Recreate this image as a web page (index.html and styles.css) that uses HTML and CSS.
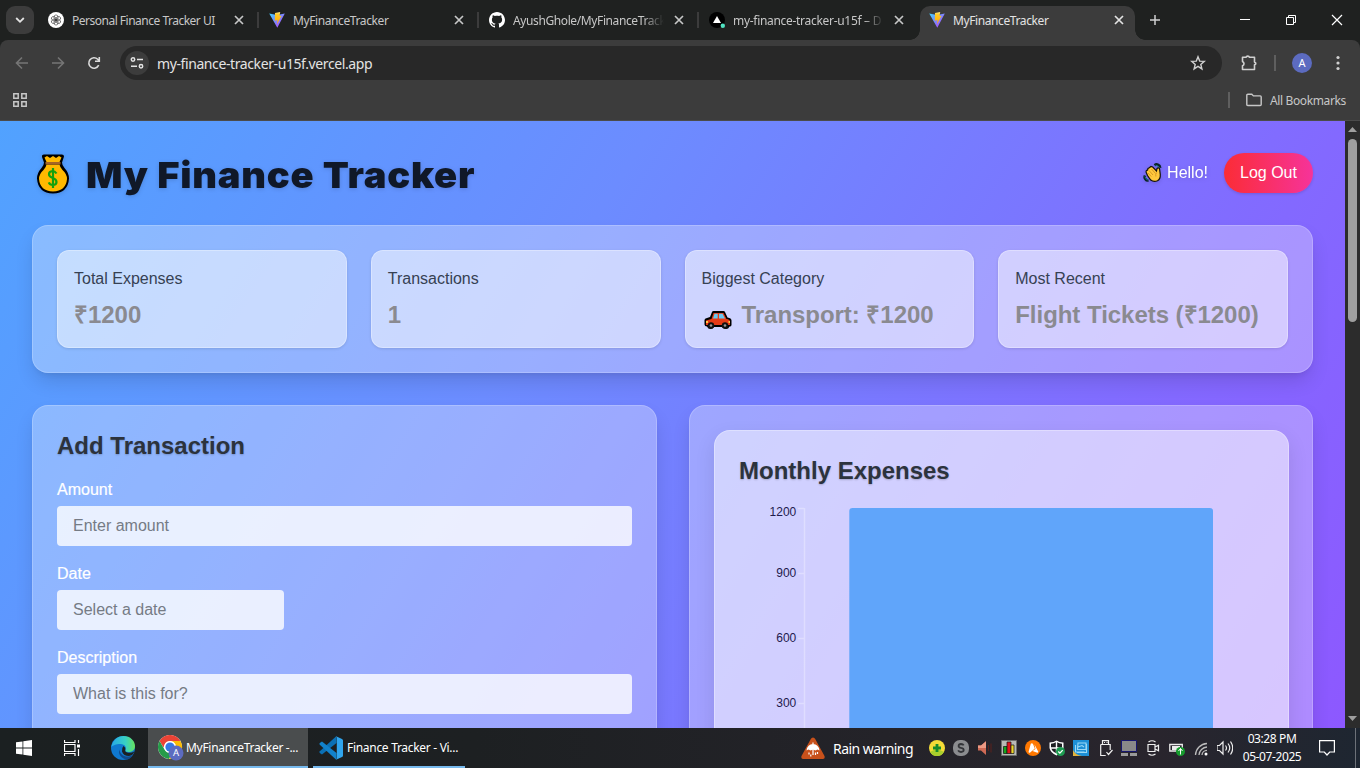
FILE: index.html
```html
<!DOCTYPE html>
<html lang="en">
<head>
<meta charset="utf-8">
<title>MyFinanceTracker</title>
<link rel="stylesheet" href="styles.css">
</head>
<body>
<svg class="defs" width="0" height="0">
  <defs>
    <linearGradient id="viteA" x1="0" y1="0" x2="1" y2="1"><stop offset="0" stop-color="#41d1ff"/><stop offset="1" stop-color="#bd34fe"/></linearGradient>
    <linearGradient id="viteB" x1="0" y1="0" x2="0" y2="1"><stop offset="0" stop-color="#ffea83"/><stop offset=".2" stop-color="#ffc928"/><stop offset="1" stop-color="#ffa800"/></linearGradient>
    <linearGradient id="edgeA" x1="0" y1="0" x2="1" y2="0"><stop offset="0" stop-color="#27a8e8"/><stop offset=".6" stop-color="#38d0c4"/><stop offset="1" stop-color="#67e35c"/></linearGradient>
    <symbol id="vite" viewBox="0 0 16 16"><path fill="url(#viteA)" d="M.2 1.6 8 3l7.8-1.4L8.3 15.7z"/><path fill="url(#viteB)" d="m6 .9 5.2-.9-.6 4 2-.3L8 12.3l.5-4.2-2.7.6z"/></symbol>
    <symbol id="x" viewBox="0 0 10 10"><path d="m1 1 8 8M9 1 1 9" stroke="currentColor" stroke-width="1.7" fill="none"/></symbol>
  </defs>
</svg>

<div class="tabstrip">
  <div class="tab-search"><svg width="10" height="8" viewBox="0 0 10 8"><path d="m1.2 2 3.8 3.8L8.8 2" fill="none" stroke="#e3e3e3" stroke-width="1.8"/></svg></div>
  <div class="tab first">
    <svg class="fav" viewBox="0 0 16 16"><circle cx="8" cy="8" r="8" fill="#fff"/><g fill="none" stroke="#333" stroke-width=".6"><ellipse cx="8" cy="5.6" rx="2" ry="2.700"/><ellipse cx="8" cy="5.6" rx="2" ry="2.700" transform="rotate(60 8 8)"/><ellipse cx="8" cy="5.6" rx="2" ry="2.700" transform="rotate(120 8 8)"/><ellipse cx="8" cy="5.6" rx="2" ry="2.700" transform="rotate(180 8 8)"/><ellipse cx="8" cy="5.6" rx="2" ry="2.700" transform="rotate(240 8 8)"/><ellipse cx="8" cy="5.6" rx="2" ry="2.700" transform="rotate(300 8 8)"/></g></svg>
    <span class="tab-title t1">Personal Finance Tracker UI</span><svg class="close"><use href="#x"/></svg><i></i>
  </div>
  <div class="tab"><svg class="fav"><use href="#vite"/></svg><span class="tab-title t2">MyFinanceTracker</span><svg class="close"><use href="#x"/></svg><i></i></div>
  <div class="tab">
    <svg class="fav" viewBox="0 0 16 16"><path fill="#fff" d="M8 0C3.6 0 0 3.6 0 8c0 3.5 2.3 6.5 5.5 7.6.4.1.5-.2.5-.4v-1.5c-2.2.5-2.7-1-2.7-1-.4-.9-.9-1.200-.9-1.200-.7-.5.1-.5.1-.5.8.1 1.200.8 1.200.8.7 1.200 1.900.9 2.300.7.1-.5.3-.9.5-1.100-1.800-.2-3.600-.9-3.600-4 0-.9.3-1.600.8-2.100-.1-.2-.4-1 .1-2.100 0 0 .7-.2 2.200.8.600-.2 1.300-.3 2-.3s1.400.1 2 .3c1.500-1 2.200-.8 2.200-.8.4 1.100.2 1.900.1 2.100.5.6.8 1.300.8 2.100 0 3.100-1.900 3.700-3.700 3.900.3.3.6.8.6 1.500v2.200c0 .2.100.5.600.4C13.700 14.500 16 11.500 16 8c0-4.400-3.600-8-8-8z"/></svg>
    <span class="tab-title t3 fade">AyushGhole/MyFinanceTrack</span><svg class="close"><use href="#x"/></svg><i></i>
  </div>
  <div class="tab">
    <svg class="fav" viewBox="0 0 16 16"><circle cx="8" cy="8" r="8" fill="#000"/><path fill="#fff" d="m8 4 4 7H4z"/><circle cx="13.800" cy="13.800" r="2.200" fill="#50e3c2"/></svg>
    <span class="tab-title t4 fade">my-finance-tracker-u15f – D</span><svg class="close"><use href="#x"/></svg>
  </div>
  <div class="tab active"><svg class="fav"><use href="#vite"/></svg><span class="tab-title t2">MyFinanceTracker</span><svg class="close"><use href="#x"/></svg></div>
  <svg class="newtab" width="12" height="12" viewBox="0 0 12 12"><path d="M6 1v10M1 6h10" stroke="#d0d0d0" stroke-width="1.500"/></svg>
  <div class="winctl">
    <svg width="46" height="40" viewBox="0 0 46 40"><path d="M18 19.500h10" stroke="#fff"/></svg>
    <svg width="46" height="40" viewBox="0 0 46 40"><path d="M18.500 17.500h7v7h-7zM20.500 17.500v-2h7v7h-2" stroke="#fff" fill="none"/></svg>
    <svg width="46" height="40" viewBox="0 0 46 40"><path d="m18 15 10 10M28 15 18 25" stroke="#fff" stroke-width="1.200"/></svg>
  </div>
</div>

<div class="toolbar">
  <div class="nav">
    <svg width="16" height="16" viewBox="0 0 16 16"><path d="M14 8H3M8 2.500 2.500 8 8 13.500" fill="none" stroke="#757575" stroke-width="1.600"/></svg>
    <svg width="16" height="16" viewBox="0 0 16 16"><path d="M2 8h11M8 2.500 13.500 8 8 13.500" fill="none" stroke="#757575" stroke-width="1.600"/></svg>
    <svg width="16" height="16" viewBox="0 0 16 16"><path d="M12.700 10.200A5.200 5.200 0 1 1 11.700 4.300L13.500 6M13.300 2v4.300H9" fill="none" stroke="#dcdcdc" stroke-width="1.600"/></svg>
  </div>
  <div class="omnibox">
    <div class="site"><svg width="14" height="14" viewBox="0 0 14 14"><g fill="none" stroke="#e3e3e3" stroke-width="1.500"><circle cx="3" cy="3.500" r="1.700"/><path d="M7 3.500h6M1 10.300h6"/><circle cx="11" cy="10.300" r="1.700"/></g></svg></div>
    <span class="url">my-finance-tracker-u15f.vercel.app</span>
    <svg class="star" width="16" height="16" viewBox="0 0 16 16"><path d="m8 1.800 1.700 4.300 4.600.3-3.500 3 1.100 4.500L8 11.400l-3.900 2.500 1.100-4.500-3.500-3 4.600-.3z" fill="none" stroke="#d0d0d0" stroke-width="1.400"/></svg>
  </div>
  <svg class="ext" width="18" height="18" viewBox="0 0 18 18"><path d="M2.500 3.300H6C6.500 1.700 9 1.700 9.500 3.300h5v4.800c1.700.3 1.700 2.300 0 2.600v4.800h-12v-3.800c2-.8 2-3.200 0-4.200z" fill="none" stroke="#d0d0d0" stroke-width="1.600" stroke-linejoin="round"/></svg>
  <span class="vsep"></span>
  <span class="avatar">A</span>
  <svg class="dots" width="4" height="16" viewBox="0 0 4 16"><g fill="#d0d0d0"><circle cx="2" cy="2.500" r="1.600"/><circle cx="2" cy="8" r="1.600"/><circle cx="2" cy="13.500" r="1.600"/></g></svg>
</div>

<div class="bookmarks">
  <svg width="14" height="14" viewBox="0 0 14 14"><path d="M.8.8h4.400v4.400H.8zM8.800.8h4.400v4.400H8.800zM.8 8.800h4.400v4.400H.8zM8.800 8.800h4.400v4.400H8.800z" fill="none" stroke="#c7c7c7" stroke-width="1.500"/></svg>
  <div class="allbm"><span class="vsep"></span><svg width="16" height="14" viewBox="0 0 16 14"><path d="M.8 11.500V2.200q0-1 1-1h4l1.600 1.700h6.800q1 0 1 1v7.600q0 1-1 1H1.800q-1 0-1-1z" fill="none" stroke="#c7c7c7" stroke-width="1.400"/></svg><span>All Bookmarks</span></div>
</div>

<div class="view">
  <main class="page">
    <header class="head">
      <h1>
        <svg width="34" height="42" viewBox="0 0 34 42"><path d="M6 2.500Q7 1 9 1.500h16q3-.5 3 2l-2 6q0 3 2.500 5.500Q33 20 33 25.500 32 40 17 40.500 2 40 1 25.500 1 20 5.500 15 8 12.500 8 9.500L6 4z" fill="#000"/><path d="M8.500 4.500 11 3l3 2 3-2 3 2 3-2 2.500 1.500L23.500 9h-13zM10.500 11.500h13q.5 3 3 5.500Q31 21 31 26q-1 12-14 12.500Q4 38 3 26q0-5 4.500-9 2.500-2.500 3-5.500z" fill="#ffb900"/><path d="M9.500 9h15v2.500h-15z" fill="#a56427"/><path d="M20.500 20.500Q19 18 16.500 18q-3.500.3-3.500 3.300 0 2.300 3.800 3.700 3.700 1.300 3.700 4 0 3-3.700 3-3 0-4-2.600M17 15v20" fill="none" stroke="#13a10e" stroke-width="2.200"/></svg>
        <span>My Finance Tracker</span>
      </h1>
      <div class="user">
        <span class="hello"><svg width="20" height="20" viewBox="0 0 20 20"><path d="M11.500 2.200q1.800-1.400 3.500-.4 2.300.8 2 3M2 12.500q-1 2.300.5 3.700 1 1.600 3 1.300" fill="none" stroke="#0b2227" stroke-width="2.600"/><path d="M12.500 2.300q3 0 3.800 2.700M2 13.500q.5 2.800 3 3.600" fill="none" stroke="#157c86" stroke-width="1"/><path d="M4.500 12.500 3 9q0-1.800 1.500-1.800L5 5.500l1.300-.7L8 3.500l1.700.5L13.500 8l.5-2.500q1.200-1.300 2.500 0l.8 6q.3 4.500-2.800 6.200-3.800 1.600-6.800-.7z" fill="#ffc83d" stroke="#14120c" stroke-width="1.200"/><path d="m6 7.500 4 4.500M8.500 6l4 4.500M5 10l3.200 3.500M13.700 9.500q-1.500 1.800-.8 4" stroke="#d18b20" fill="none" stroke-width=".8"/></svg>Hello!</span>
        <button class="logout">Log Out</button>
      </div>
    </header>

    <section class="panel stats">
      <div class="stat"><p>Total Expenses</p><strong>₹1200</strong></div>
      <div class="stat"><p>Transactions</p><strong>1</strong></div>
      <div class="stat"><p>Biggest Category</p><strong><svg class="car" width="28" height="18" viewBox="0 0 28 18"><path d="M.5 9Q.5 7.500 3 7L6 6 8 1q.4-1 1.500-1h10q1 0 1.500 1l2.500 5.500q4 .5 4 3V14q0 1.500-2 1.500-1 2.500-3.500 2.500T18 16h-8q-1 2-3.500 2T3 15.500q-2.500 0-2.500-2z" fill="#000"/><path d="M2 9.500 7.500 8l2-6h10l3 6q3.500.5 3.500 2.500v3.500H2z" fill="#e63b16"/><path d="m9 7.500 1.500-4.700h3.200v4.700zM15 2.800h3.500L21 7.500h-6z" fill="#67c8f2"/><path d="M2 10h2v2H2zM24.500 10h1.500v2h-1.500z" fill="#ffc83d"/><circle cx="7" cy="14.500" r="3.200" fill="#111"/><circle cx="21" cy="14.500" r="3.200" fill="#111"/><circle cx="7" cy="14.500" r="1.300" fill="#999"/><circle cx="21" cy="14.500" r="1.300" fill="#999"/></svg>Transport: ₹1200</strong></div>
      <div class="stat"><p>Most Recent</p><strong>Flight Tickets (₹1200)</strong></div>
    </section>

    <div class="cols">
      <section class="panel form">
        <h2>Add Transaction</h2>
        <label>Amount</label><input placeholder="Enter amount">
        <label>Date</label><input class="date" placeholder="Select a date">
        <label>Description</label><input placeholder="What is this for?">
      </section>
      <section class="panel">
        <div class="chart">
          <h2>Monthly Expenses</h2>
          <svg width="525" height="260" viewBox="0 0 525 260">
            <path d="M65.500 5v255M59 5.500h6M59 70.500h6M59 135.500h6M59 200.500h6" stroke="#fff" stroke-opacity=".3" fill="none" stroke-width="1.500"/>
            <path d="M110.300 260V8q0-3 3-3h357.700q3 0 3 3v252z" fill="#60a5fa"/>
            <g class="ticks"><text x="57.300" y="13">1200</text><text x="57.300" y="74">900</text><text x="57.300" y="139">600</text><text x="57.300" y="204">300</text></g>
          </svg>
        </div>
      </section>
    </div>
  </main>
  <div class="scroll"><svg width="9" height="5" viewBox="0 0 9 5"><path d="M4.500 0 9 5H0z" fill="#9f9f9f"/></svg><span class="thumb"></span><svg width="9" height="5" viewBox="0 0 9 5"><path d="M4.500 5 9 0H0z" fill="#9f9f9f"/></svg></div>
</div>

<div class="taskbar">
  <div class="tb start"><svg width="16" height="16" viewBox="0 0 16 16"><path fill="#fff" d="M0 2.300 6.500 1.400v6.200H0zM7.300 1.300 16 0v7.600H7.300zM0 8.400h6.500v6.200L0 13.700zM7.300 8.400H16V16l-8.700-1.300z"/></svg></div>
  <div class="tb view-btn"><svg width="17" height="16" viewBox="0 0 17 16"><path d="M.5 0v2.500h10.500V0M.5 16v-2.500h10.500V16M.5 4.500h10.500v7H.5zM14.500 0v3M14.500 9v7" fill="none" stroke="#fff" stroke-width="1.200"/><path d="M13 4.500h3v3h-3z" fill="#fff"/></svg></div>
  <div class="tb edge"><svg width="24" height="24" viewBox="0 0 24 24"><circle cx="12" cy="12" r="12" fill="#0f78cf"/><path d="M.3 11C1.500 4.500 6.500 0 12.500 0 19.500 0 24 5 24 10c0 4-3 6-6.500 6-2.500 0-3.800-.8-3-2 1.500-2.200-.5-6-5-6C5 8 1.500 9.500.3 11z" fill="url(#edgeA)"/><path d="M8.500 13.500c0 4.500 4.500 7.500 9 7 2 0 4-1.200 4.500-1.500-1.500 2.700-3.500 4-5.500 4.500-5.500-.5-10-5-8-10z" fill="#114a8b"/><path d="M12.500 10q2.500 1.500 1.800 4-.8 1.400 1.200 2.200 4 1.500 7.800-.7-1.300 4-5.300 4.500-5.500 0-7-4.500-.5-3.500 1.500-5.500z" fill="#1c2022"/></svg></div>
  <div class="task on"><svg width="26" height="26" viewBox="0 0 26 26"><circle cx="12" cy="12" r="12" fill="#fff"/><path d="M1.600 6A12 12 0 0 1 22.400 6H12a6 6 0 0 0-5.300 3.200L5.500 12.500z" fill="#ea4335"/><path d="M1.600 6 6.800 15A6 6 0 0 0 12 18h2l-3 6A12 12 0 0 1 1.600 6z" fill="#269b49"/><path d="M22.400 6A12 12 0 0 1 11 24l6.200-9a6 6 0 0 0-5.200-9z" fill="#fbbc05"/><circle cx="12" cy="12" r="5.800" fill="#fff"/><circle cx="12" cy="12" r="4.600" fill="#3478e5"/><circle cx="18" cy="18" r="7.500" fill="#5c6bc0"/><text x="18" y="21.300" text-anchor="middle" class="badge">A</text></svg><span class="k1">MyFinanceTracker -...</span></div>
  <div class="task"><svg width="24" height="24" viewBox="0 0 24 24"><path d="M17.500 0v7L3 18.500.8 17q-.8-.8 0-1.700z" fill="#0b70b5"/><path d="M17.500 24v-7L3 5.500.8 7q-.8.800 0 1.700z" fill="#1282cc"/><path d="M17 0.300 23 3q1 .6 1 1.600v14.800q0 1-1 1.600l-6 2.800q.8-.4.800-1.800V2q0-1.300-.8-1.700z" fill="#30a5ee"/></svg><span class="k2">Finance Tracker - Vi...</span></div>
  <div class="weather"><svg width="24" height="22" viewBox="0 0 24 22"><path d="M12 .5q1.500 0 2.200 1.500l9.300 17q.8 3-1.500 3H2q-2.300 0-1.500-3l9.300-17Q10.500.5 12 .5z" fill="#c8511b"/><path d="M5.500 13.500Q6.500 7 12 7t6.500 6.500l-2-1-2 1-2.500-1-2.500 1-2-1zM11.400 5.500h1.200V18h-1.200z" fill="#fff"/><path d="M8 15.500v2M9.800 17.500v2M14.500 15.500v2.500M16.500 15v2" stroke="#fff" stroke-width="1.200"/></svg><span>Rain warning</span></div>
  <div class="tray">
    <svg viewBox="0 0 16 16"><circle cx="8" cy="8" r="8" fill="#f3dc37"/><path d="M1 12Q8 7 15 12a8 8 0 0 1-14 0z" fill="#a9cf2c"/><path d="M6.600 4h2.800v2.600H12v2.800H9.400V12H6.600V9.400H4V6.600h2.600z" fill="#178a2b"/></svg>
    <svg viewBox="0 0 16 16"><rect width="16" height="16" rx="7" fill="#8b8c8f"/><path d="M10.700 5.400Q10 4 8 4q-2.400.1-2.400 1.900 0 1.400 2.500 2 2.600.5 2.600 2.200 0 1.800-2.700 1.900-2.100 0-2.900-1.600" stroke="#333438" stroke-width="1.800" fill="none"/></svg>
    <svg viewBox="0 0 16 16"><path d="M1 5.500h3L9 1v14l-5-4.500H1z" fill="#cf6a55"/><path d="m4 5.500 5-4V8H1V5.500z" fill="#eb9a85"/><path d="M11.500 5v6M14 3.500v9" stroke="#5b211c" stroke-width="1"/></svg>
    <svg viewBox="0 0 16 16"><path d="M.5.500h15v15H.5z" fill="#b9bab5" stroke="#6d6d6d"/><path d="M2.500 6.500h3.500v7H2.500z" fill="#16a51d" stroke="#111" stroke-width=".7"/><path d="M6 2h4v11.500H6z" fill="#e3131a" stroke="#111" stroke-width=".7"/><path d="M10 5h3v8.500h-3z" fill="#edd62b" stroke="#111" stroke-width=".7"/></svg>
    <svg viewBox="0 0 16 16"><circle cx="8" cy="8" r="8" fill="#ff7800"/><path d="M5.800 3.700q1.200-1.200 2.200.3l1.800 4.500-4.600 4q-1.700.8-1.600-.8zM9.500 4.500l3.800 7.200q-.3 1.300-1.600.8L7.500 11l3-2z" fill="#fff"/></svg>
    <svg viewBox="0 0 16 16"><path d="M7.500.500Q10 2.500 14.500 2.500V8q-1 5-7 7.500Q1.500 13 .5 8V2.500Q5 2.500 7.500.5z" fill="#fff"/><path d="M2 3.800q3-.2 4.800-1.500v5H2zM8.200 2.300Q10 3.600 13 3.800v3.500H8.200zM2.300 8.700h4.500v4.600Q3.300 11.500 2.300 8.700zM8.200 8.700H12q-1 3-3.800 4.600z" fill="#1d1f22"/><circle cx="11.500" cy="11.500" r="4.500" fill="#1d9b50"/><path d="m9.300 11.500 1.600 1.600 2.800-3" stroke="#fff" stroke-width="1.300" fill="none"/></svg>
    <svg viewBox="0 0 16 16"><path d="M0 0h16v16H0z" fill="#1d8fd6"/><path d="M0 10v6h9Q2 15 0 10z" fill="#e5b33b"/><path d="M5 3h8v6.500H4.500zM2.500 5v7h9M5 7l4-1.500L11 7M13.500 4v8.500H4" stroke="#9bd9f6" fill="none" stroke-width="1.100"/></svg>
    <svg viewBox="0 0 16 16"><path d="M5.500 4.500V.7h6v3.800M3.700 4.500h9.500V10M3.700 4.500v11h5M7 2.500h1M9.500 2.500h1M9.500 12l2 2.500 4-4.500" stroke="#eee" fill="none" stroke-width="1.200"/></svg>
    <svg viewBox="0 0 16 16"><path d="M.5.500h15v11H.5z" fill="#898989" stroke="#17176e"/><path d="M0 13h7v3H0zM9 13h7v3H9z" fill="#9a9a9a"/></svg>
    <svg viewBox="0 0 16 16"><path d="M3 4.500h7v7H3zM10 7l3.500-1.800v5.600L10 9M3.500 2Q7-.5 10.500 2M3.500 14q3.500 2.500 7 0" stroke="#eee" fill="none" stroke-width="1.200"/></svg>
    <svg viewBox="0 0 16 16"><path d="M.8 4.500h12.500v6.500H.8z" stroke="#eee" fill="none" stroke-width="1.300"/><path d="M3 6h8v4H3z" fill="#eee"/><circle cx="11.500" cy="11.500" r="4.500" fill="#169b2d"/><path d="M11.500 8.500v6M9.500 11l2-2.500 2 2.500" stroke="#fff" fill="none"/></svg>
    <svg viewBox="0 0 16 16"><path d="M2.500 15A12 12 0 0 1 14 3.500M6 15a8.500 8.500 0 0 1 8-8M9 15a5 5 0 0 1 5-4.700" stroke="#bbb" fill="none" stroke-width="1.300"/><circle cx="13" cy="14" r="1.500" fill="#fff"/></svg>
    <svg viewBox="0 0 16 16"><path d="M0 5.500h2.500L6 2v12l-3.500-3.500H0zM8.500 5.500q2 2.500 0 5M11 3.500q3.500 4.500 0 9M13.500 1.500q4.500 6.500 0 13" stroke="#eee" fill="none" stroke-width="1.200"/></svg>
  </div>
  <div class="clock"><span>03:28 PM</span><span>05-07-2025</span></div>
  <svg class="note" width="16" height="16" viewBox="0 0 16 16"><path d="M.6.700h14.800v11.300h-4.700L8 15l-2.700-3H.6z" fill="none" stroke="#fff" stroke-width="1.200"/></svg>
  <span class="peek"></span>
</div>
</body>
</html>
```
FILE: styles.css
```css
* { box-sizing: border-box; }
body { margin: 0; width: 1360px; height: 768px; overflow: hidden; display: flex; flex-direction: column; font-family: "Liberation Sans", Arial, sans-serif; }
svg { display: block; flex: none; }
.defs { position: absolute; }

/* browser chrome */
.tabstrip, .toolbar, .bookmarks, .taskbar { font-family: "Noto Sans", "Open Sans", sans-serif; white-space: nowrap; }
.tabstrip { height: 40px; flex: none; background: #1f2120; display: flex; align-items: center; padding-left: 6px; color: #c7c7c7; }
.tab-search { width: 28px; height: 28px; border-radius: 9px; background: #3c3c3c; display: grid; place-items: center; margin-right: 6px; }
.tab { width: 220px; height: 34px; margin-top: 6px; padding: 0 0 6px 9px; display: flex; align-items: center; position: relative; flex: none; }
.tab.first { padding-left: 8px; }
.fav { width: 16px; height: 16px; margin-right: 8px; }
.tab-title { width: 151px; font-size: 12px; flex: none; line-height: 18px; padding-top: 1px; }
.t1 { letter-spacing: -.5px; }
.t2 { letter-spacing: -.4px; }
.t3 { letter-spacing: -.39px; }
.t4 { letter-spacing: -.3px; }
.fade { -webkit-mask-image: linear-gradient(90deg, #000 130px, transparent 151px); mask-image: linear-gradient(90deg, #000 130px, transparent 151px); }
.close { width: 10px; height: 10px; margin-left: 10px; }
.tab.first .close { margin-left: 11px; }
.tab i { width: 2px; height: 16px; background: #3c3c3c; margin-left: 13px; }
.tab.active { background: #3c3c3c; border-radius: 10px 10px 0 0; width: 215px; color: #e3e3e3; }
.tab.active::before, .tab.active::after { content: ""; position: absolute; bottom: 0; width: 10px; height: 10px; }
.tab.active::before { left: -10px; background: radial-gradient(circle at 0 0, transparent 9.500px, #3c3c3c 10px); }
.tab.active::after { right: -10px; background: radial-gradient(circle at 100% 0, transparent 9.500px, #3c3c3c 10px); }
.newtab { margin-left: 14px; }
.winctl { display: flex; margin-left: auto; }
.toolbar { height: 40px; flex: none; background: #3c3c3c; display: flex; align-items: center; padding: 6px 20px 0 14px; border-radius: 8px 8px 0 0; box-shadow: 0 -8px 0 #1f2120; position: relative; z-index: 0; }
.tabstrip { position: relative; z-index: 1; }
.nav { display: flex; gap: 20px; width: 106px; }
.omnibox { width: 1102px; height: 34px; border-radius: 17px; background: #282828; display: flex; align-items: center; padding-left: 5px; flex: none; }
.site { width: 24px; height: 24px; border-radius: 50%; background: #3c3c3c; display: grid; place-items: center; margin-right: 8px; }
.url { font-size: 14px; color: #e3e3e3; letter-spacing: -.4px; }
.star { margin: 0 16px 0 auto; }
.ext { margin-left: 18px; }
.vsep { width: 2px; height: 16px; background: #5f5f5f; }
.toolbar .vsep { margin-left: 16px; }
.avatar { width: 20px; height: 20px; border-radius: 50%; background: #5c6bc0; color: #fff; font-size: 11px; line-height: 20px; text-align: center; margin-left: 16px; }
.dots { margin-left: 24px; }
.bookmarks { height: 41px; flex: none; background: #3c3c3c; border-bottom: 1px solid #4b4b4b; display: flex; align-items: center; justify-content: space-between; padding: 0 14px 0 13px; color: #c7c7c7; font-size: 12px; }
.allbm { display: flex; align-items: center; letter-spacing: -.36px; }
.allbm svg { margin: 0 8px 0 16px; }

/* application */
.view { height: 607px; flex: none; display: flex; overflow: hidden; }
.page { width: 1345px; padding: 32px; background: linear-gradient(122deg, #51a2ff 0, #6c8cff 38%, #8369ff 78%, #8d58ff 100%); overflow: hidden; }
.head { display: flex; justify-content: space-between; height: 40px; margin-bottom: 32px; }
h1 { margin: 0; display: flex; align-items: center; padding: 0 0 0 4px; height: 42px; filter: drop-shadow(0 1px 2px rgba(0,0,0,.15)); }
h1 span { font-family: Inter, "Open Sans", sans-serif; font-weight: 900; font-size: 36px; line-height: 40px; letter-spacing: .7px; color: #101828; margin: 2px 0 0 16px; white-space: nowrap; transform: scaleX(1.06); transform-origin: 0 50%; }
.user { display: flex; align-items: center; gap: 16px; }
.hello { display: flex; align-items: center; gap: 4px; color: #fff; font-size: 16px; filter: drop-shadow(0 1px 2px rgba(0,0,0,.15)); }
.logout { width: 89px; height: 40px; padding: 0; border: 0; border-radius: 20px; color: #fff; font: 16px "Liberation Sans", Arial, sans-serif; background: linear-gradient(90deg, #fb2c36, #f6339a); box-shadow: 0 1px 3px rgba(0,0,0,.15); }
.panel { background: rgba(255,255,255,.3); border: 1px solid rgba(255,255,255,.2); border-radius: 16px; padding: 24px; box-shadow: 0 10px 20px -3px rgba(0,0,0,.14), 0 4px 6px -4px rgba(0,0,0,.1); }
.stats { display: grid; grid-template-columns: repeat(4, 1fr); gap: 24px; margin-bottom: 32px; }
.stat { height: 98px; padding: 16px; border-radius: 12px; border: 1px solid rgba(255,255,255,.3); background: rgba(255,255,255,.5); box-shadow: 0 1px 3px rgba(0,0,0,.12); white-space: nowrap; }
.stat p { margin: 0 0 8px; font-size: 16px; line-height: 24px; color: #364153; }
.stat strong { display: flex; font-size: 24px; line-height: 32px; color: #8a8a90; letter-spacing: -.04px; }
.car { margin: 12px 10px 0 2px; }
.cols { display: grid; grid-template-columns: 625px 624px; gap: 32px; }
.cols .panel { height: 420px; }
h2 { margin: 0 0 16px; font-size: 24px; line-height: 32px; color: #2c333d; text-shadow: 0 1px 2px rgba(0,0,0,.2); }
.form { display: flex; flex-direction: column; align-items: flex-start; }
label { color: #fff; font-size: 16px; line-height: 24px; margin-bottom: 4px; -webkit-text-stroke: .2px #fff; }
input { width: 575px; height: 40px; flex: none; border: 0; border-radius: 4px; padding: 0 16px; margin: 0 0 16px; background: rgba(255,255,255,.8); font: 16px "Liberation Sans", Arial, sans-serif; }
input::placeholder { color: #757b85; opacity: 1; }
input.date { width: 227px; }
.chart { width: 575px; height: 420px; padding: 24px; border-radius: 16px; border: 1px solid rgba(255,255,255,.3); background: rgba(255,255,255,.5); box-shadow: 0 8px 20px rgba(0,0,0,.1); }
.ticks { font-size: 12px; fill: #1e1a4d; text-anchor: end; }
.scroll { width: 15px; background: #2c2c2c; display: flex; flex-direction: column; align-items: center; padding: 6px 0 7px; }
.thumb { width: 9px; height: 183px; border-radius: 5px; background: #9f9f9f; margin: 7px 0 auto; }

/* taskbar */
.taskbar { height: 40px; flex: none; display: flex; align-items: center; background: linear-gradient(90deg, #1b2021 0, #1d2022 35%, #242329 65%, #29252d 85%, #1e2631 100%); color: #fff; font-size: 12px; }
.start { padding-left: 16px; width: 64px; }
.view-btn { width: 47px; }
.edge { width: 37px; }
.task { height: 40px; width: 160px; display: flex; align-items: center; padding: 2px 0 0 10px; border-bottom: 2px solid #76b9ed; }
.task.on { background: #4a4d4e; }
.task svg { margin-right: 2px; }
.task span { margin-top: -2px; }
.task:not(.on) { margin-left: 5px; width: 152px; padding-left: 6px; }
.task:not(.on) svg { margin-right: 4px; }
.k1, .k2 { letter-spacing: -.3px; }
.badge { font-size: 9.500px; fill: #fff; }
.weather { display: flex; align-items: center; gap: 8px; margin-left: 336px; width: 124px; font-size: 14px; letter-spacing: -.55px; }
.tray { display: flex; gap: 8px; padding-left: 4px; }
.tray svg { width: 16px; height: 16px; }
.clock { width: 78px; display: flex; flex-direction: column; align-items: center; line-height: 18px; letter-spacing: -.4px; }
.note { margin-left: 8px; }
.peek { width: 1px; height: 40px; background: #6d7178; margin-left: 20px; }
```
